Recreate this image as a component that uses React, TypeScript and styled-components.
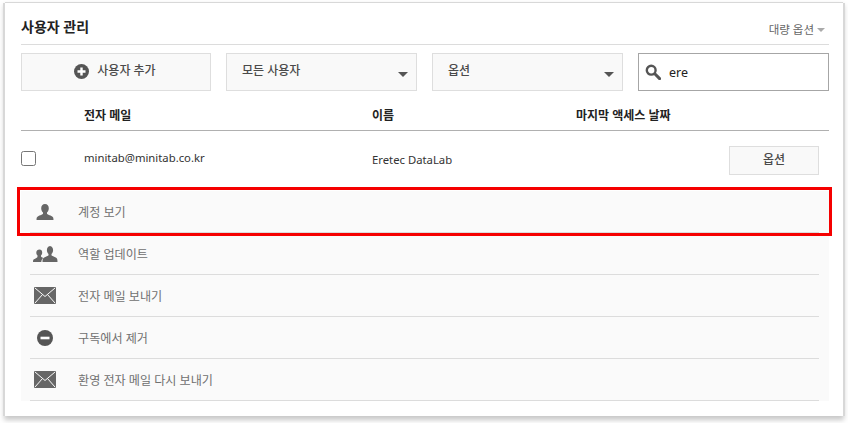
import styled, { createGlobalStyle } from 'styled-components';

const GlobalStyle = createGlobalStyle`
  html, body {
    margin: 0;
    padding: 0;
    background: #fff;
  }
  body {
    font-family: "Noto Sans", "Noto Sans CJK KR", sans-serif;
    color: #333;
  }
  * {
    box-sizing: border-box;
  }
`;

const Page = styled.div`
  width: 848px;
  height: 423px;
  padding: 3px 5px 0 5px;
  overflow: hidden;
`;

const Panel = styled.section`
  position: relative;
  width: 838px;
  height: 413px;
  padding: 0 14px 0 16px;
  background: #fff;
  box-shadow: 0 -1px 0 0 #d8d8d8, -2px 0 0 0 #d8d8d8, 2px 0 0 0 #d8d8d8, 0 3px 5px 1px #c8c8c8;
`;

const Header = styled.header`
  height: 42px;
  display: flex;
  align-items: flex-end;
  justify-content: space-between;
  padding: 0 4px 7px 0;
  border-bottom: 1px solid #dcdcdc;
`;

const Title = styled.h2`
  margin: 0;
  font-size: 14px;
  line-height: 20px;
  font-weight: 700;
  color: #222;
`;

const BulkMenu = styled.div`
  display: flex;
  align-items: center;
  gap: 3px;
  font-size: 11.5px;
  line-height: 14px;
  color: #666;
`;

const Caret = styled.span<{ $size?: number; $color?: string }>`
  width: 0;
  height: 0;
  border-left: ${(p) => p.$size ?? 5}px solid transparent;
  border-right: ${(p) => p.$size ?? 5}px solid transparent;
  border-top: ${(p) => p.$size ?? 5}px solid ${(p) => p.$color ?? '#555'};
`;

const Toolbar = styled.div`
  display: grid;
  grid-template-columns: 190px 191px 191px 191px;
  justify-content: space-between;
  margin-top: 8px;
  height: 38px;
`;

const AddButton = styled.button`
  display: flex;
  align-items: center;
  justify-content: center;
  gap: 8px;
  padding: 0 2px 4px 0;
  background: #f9f9f9;
  border: 1px solid #dedede;
  font: inherit;
  font-size: 12px;
  font-weight: 500;
  color: #4a4a4a;
  svg {
    margin-top: 3px;
  }
`;

const Select = styled.div`
  display: flex;
  align-items: center;
  justify-content: space-between;
  padding: 0 7px 5px 15px;
  background: #f9f9f9;
  border: 1px solid #dedede;
  font-size: 12px;
  font-weight: 500;
  color: #4a4a4a;
  ${Caret} {
    margin-top: 9px;
    margin-right: 1px;
  }
`;

const Search = styled.div`
  display: flex;
  align-items: center;
  gap: 8px;
  padding-left: 6px;
  border: 1px solid #a6a6a6;
  background: #fff;
  font-size: 12.5px;
  color: #222;
`;

const TableHead = styled.div`
  display: grid;
  grid-template-columns: 63px 288px 204px 1fr;
  height: 40px;
  align-items: center;
  padding-top: 9px;
  border-bottom: 1px solid #b0b0b0;
  font-size: 12px;
  font-weight: 700;
  color: #222;
`;

const UserRow = styled.div`
  display: grid;
  grid-template-columns: 63px 288px 1fr 90px;
  height: 60px;
  padding-right: 10px;
  align-items: center;
  font-size: 11.3px;
  color: #333;
`;

const Check = styled.span`
  display: block;
  width: 15px;
  height: 15px;
  margin-top: -6px;
  border: 1px solid #767676;
  border-radius: 2.5px;
  background: #fff;
`;

const Email = styled.span`
  margin-top: -8px;
`;

const Name = styled.span`
  margin-top: -3px;
`;

const OptionButton = styled.button`
  width: 90px;
  height: 29px;
  margin-top: -2px;
  padding: 0 0 2px;
  background: #f9f9f9;
  border: 1px solid #dedede;
  font: inherit;
  font-size: 12px;
  font-weight: 500;
  color: #4a4a4a;
`;

const Menu = styled.ul`
  list-style: none;
  margin: 0;
  padding: 0 10px 0 9px;
  background: #fafafa;
`;

const MenuItem = styled.li`
  display: flex;
  align-items: center;
  height: 42px;
  border-bottom: 1px solid #dcdcdc;
  font-size: 12.1px;
  color: #707070;
`;

const IconSlot = styled.span`
  display: flex;
  align-items: center;
  justify-content: center;
  width: 30px;
  margin-right: 18px;
`;

const Highlight = styled.div`
  position: absolute;
  left: 12px;
  top: 184px;
  width: 815px;
  height: 49px;
  border: 3px solid #f50000;
  pointer-events: none;
`;

const PlusIcon = () => (
  <svg width="15" height="15" viewBox="0 0 15 15">
    <circle cx="7.5" cy="7.5" r="7.5" fill="#555" />
    <path d="M3.5 7.5h8M7.5 3.5v8" stroke="#fff" strokeWidth="2.4" />
  </svg>
);

const SearchIcon = () => (
  <svg width="16" height="16" viewBox="0 0 16 16" fill="none">
    <circle cx="6.2" cy="6.2" r="4.4" stroke="#555" strokeWidth="2.4" />
    <path d="M9.8 9.8l4.8 4.8" stroke="#555" strokeWidth="3" strokeLinecap="round" />
  </svg>
);

const UserIcon = () => (
  <svg width="18" height="16" viewBox="0 0 18 16">
    <path
      d="M9 0c2.4 0 3.8 1.8 3.8 4.2 0 1.700-.7 3.300-1.800 4.300v1.300c0 .6 3.200 1.500 5.200 2.700.8.500 1.300 1.300 1.300 3.500H.5c0-2.200.5-3 1.300-3.500 2-1.200 5.200-2.100 5.200-2.700V8.500C5.900 7.500 5.200 5.900 5.200 4.200 5.200 1.800 6.600 0 9 0z"
      fill="#666"
    />
  </svg>
);

const UsersIcon = () => (
  <svg width="25" height="16" viewBox="0 0 25 16">
    <path
      d="M6.500 3.500c1.700 0 2.700 1.300 2.700 3 0 1.200-.5 2.300-1.200 3v1c0 .4 1.300.9 2.200 1.500-1 .8-1.700 1.800-1.900 4H0c0-1.700.4-2.300 1-2.700 1.400-.9 3.500-1.400 3.500-2.800v-1c-.7-.7-1.200-1.800-1.200-3 0-1.700 1.500-3 3.200-3z"
      fill="#666"
    />
    <path
      d="M16.500 0c2.300 0 3.600 1.700 3.600 4 0 1.600-.6 3.100-1.600 4v1.300c0 .6 2.900 1.400 4.700 2.500.8.500 1.300 1.200 1.300 4.200H9.500c0-3 .5-3.700 1.300-4.200 1.800-1.100 4.700-1.900 4.700-2.500V8c-1-.9-1.600-2.400-1.600-4 0-2.300 1.300-4 3.600-4z"
      fill="#666"
    />
  </svg>
);

const MailIcon = () => (
  <svg width="22" height="17" viewBox="0 0 22 17">
    <rect width="22" height="17" rx="1" fill="#666" />
    <path d="M1 1l10 8.500 10-8.500M1 16l7.500-8.500M21 16l-7.500-8.500" stroke="#fafafa" strokeWidth="1" fill="none" />
  </svg>
);

const MinusIcon = () => (
  <svg width="16" height="16" viewBox="0 0 16 16">
    <circle cx="8" cy="8" r="8" fill="#555" />
    <rect x="3.500" y="6.700" width="9" height="2.600" fill="#fff" />
  </svg>
);

const actions = [
  { label: '계정 보기', icon: <UserIcon /> },
  { label: '역할 업데이트', icon: <UsersIcon /> },
  { label: '전자 메일 보내기', icon: <MailIcon /> },
  { label: '구독에서 제거', icon: <MinusIcon /> },
  { label: '환영 전자 메일 다시 보내기', icon: <MailIcon /> },
];

const App = () => {
  return (
    <Page>
      <GlobalStyle />
      <Panel>
        <Header>
          <Title>사용자 관리</Title>
          <BulkMenu>
            대량 옵션
            <Caret $size={4} $color="#aaa" />
          </BulkMenu>
        </Header>
        <Toolbar>
          <AddButton type="button">
            <PlusIcon />
            사용자 추가
          </AddButton>
          <Select>
            모든 사용자
            <Caret />
          </Select>
          <Select>
            옵션
            <Caret />
          </Select>
          <Search>
            <SearchIcon />
            ere
          </Search>
        </Toolbar>
        <TableHead>
          <span />
          <span>전자 메일</span>
          <span>이름</span>
          <span>마지막 액세스 날짜</span>
        </TableHead>
        <UserRow>
          <Check />
          <Email>minitab@minitab.co.kr</Email>
          <Name>Eretec DataLab</Name>
          <OptionButton type="button">옵션</OptionButton>
        </UserRow>
        <Menu>
          {actions.map((item) => (
            <MenuItem key={item.label}>
              <IconSlot>{item.icon}</IconSlot>
              {item.label}
            </MenuItem>
          ))}
        </Menu>
        <Highlight />
      </Panel>
    </Page>
  );
};

export default App;
